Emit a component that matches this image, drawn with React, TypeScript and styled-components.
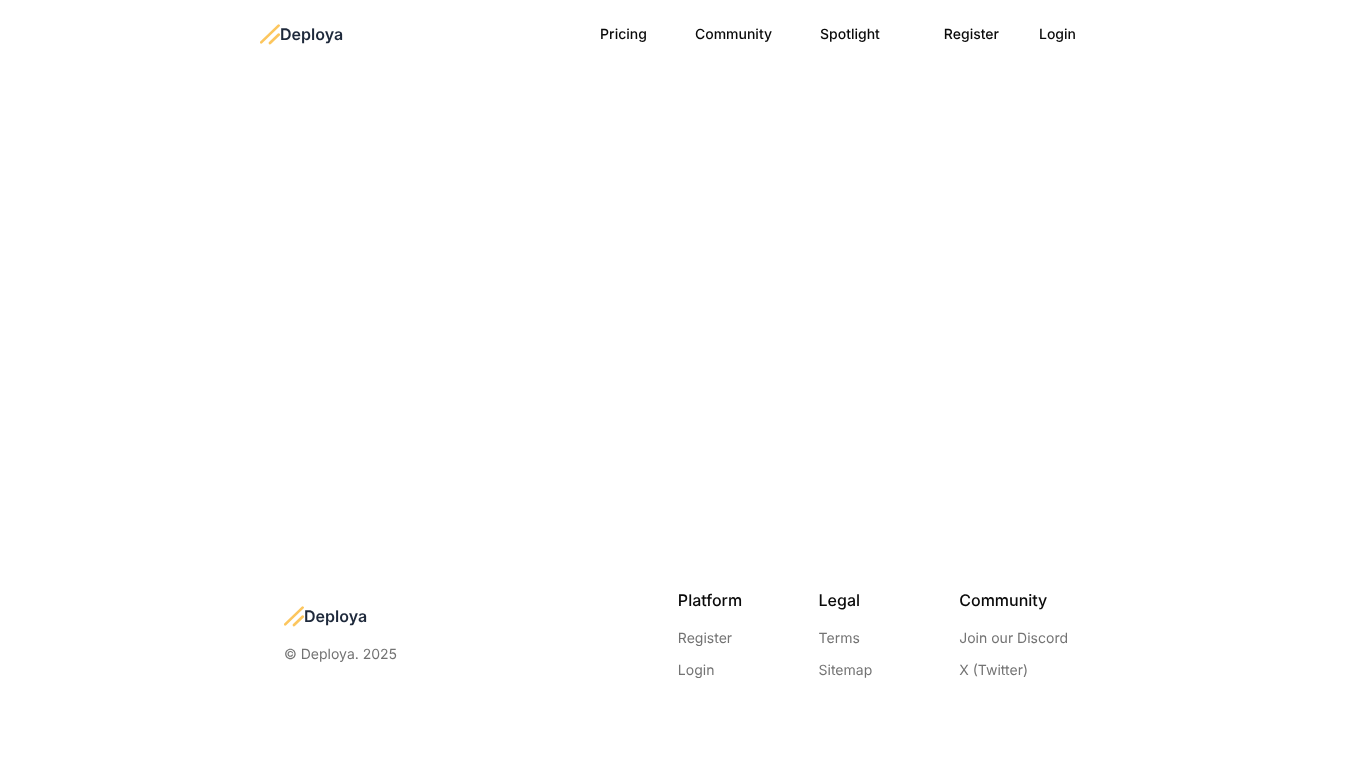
import React from "react";
import styled, { createGlobalStyle } from "styled-components";

const Global = createGlobalStyle`
  html, body { margin: 0; padding: 0; background: #fff; }
  body {
    font-family: Inter, "Liberation Sans", sans-serif;
    text-rendering: geometricPrecision;
    -webkit-font-smoothing: antialiased;
  }
  a { text-decoration: none; color: inherit; }
`;

const Page = styled.div`
  width: 832px;
  height: 760px;
  margin: 0 auto;
  display: flex;
  flex-direction: column;
  will-change: transform;
`;

const Header = styled.header`
  height: 68px;
  display: flex;
  align-items: center;
`;

const LogoLink = styled.a`
  display: flex;
  align-items: center;
  font-size: 16px;
  font-weight: 600;
  line-height: 24px;
  color: #1e293b;
`;

const LogoMark = styled.svg`
  width: 20px;
  height: 21px;
  margin-top: 1px;
  flex: none;
`;

const MainNav = styled.nav`
  margin-left: 257px;
  padding-top: 2px;
  display: flex;
  gap: 48px;
`;

const AuthNav = styled.nav`
  margin-left: 64px;
  padding-top: 2px;
  display: flex;
  gap: 40px;
`;

const NavLink = styled.a`
  font-size: 14px;
  font-weight: 500;
  line-height: 20px;
  color: #0a0a0a;
`;

const Main = styled.main`
  flex: 1;
`;

const Footer = styled.footer`
  height: 192px;
  padding: 0 24px;
  display: flex;
  justify-content: space-between;
  box-sizing: border-box;
`;

const Brand = styled.div`
  padding-top: 36px;
  display: flex;
  flex-direction: column;
  gap: 17px;
`;

const Copyright = styled.p`
  margin: 0;
  font-size: 14px;
  line-height: 20px;
  color: #737373;
`;

const Columns = styled.div`
  display: grid;
  grid-template-columns: 140.7px 140.7px auto;
  padding-top: 20px;
`;

const Column = styled.div`
  display: flex;
  flex-direction: column;
`;

const ColumnTitle = styled.h3`
  margin: 0 0 11px;
  font-size: 16px;
  font-weight: 500;
  line-height: 24px;
  color: #0a0a0a;
`;

const FooterLink = styled.a`
  font-size: 14px;
  line-height: 20px;
  padding: 6px 0;
  color: #737373;
`;

const Logo = () => (
  <LogoLink href="#">
    <LogoMark viewBox="0 0 20 21" fill="none" stroke="#fcc65e" strokeWidth="2.7" strokeLinecap="round">
      <path d="M1.2 18.4 L18.6 1.6" />
      <path d="M10 19 L18.8 10.6" />
    </LogoMark>
    Deploya
  </LogoLink>
);

const columns = [
  { title: "Platform", links: ["Register", "Login"] },
  { title: "Legal", links: ["Terms", "Sitemap"] },
  { title: "Community", links: ["Join our Discord", "X (Twitter)"] },
];

export default function App() {
  return (
    <Page>
      <Global />
      <Header>
        <Logo />
        <MainNav>
          <NavLink href="#">Pricing</NavLink>
          <NavLink href="#">Community</NavLink>
          <NavLink href="#">Spotlight</NavLink>
        </MainNav>
        <AuthNav>
          <NavLink href="#">Register</NavLink>
          <NavLink href="#">Login</NavLink>
        </AuthNav>
      </Header>
      <Main />
      <Footer>
        <Brand>
          <Logo />
          <Copyright>© Deploya. 2025</Copyright>
        </Brand>
        <Columns>
          {columns.map((c) => (
            <Column key={c.title}>
              <ColumnTitle>{c.title}</ColumnTitle>
              {c.links.map((l) => (
                <FooterLink href="#" key={l}>{l}</FooterLink>
              ))}
            </Column>
          ))}
        </Columns>
      </Footer>
    </Page>
  );
}
